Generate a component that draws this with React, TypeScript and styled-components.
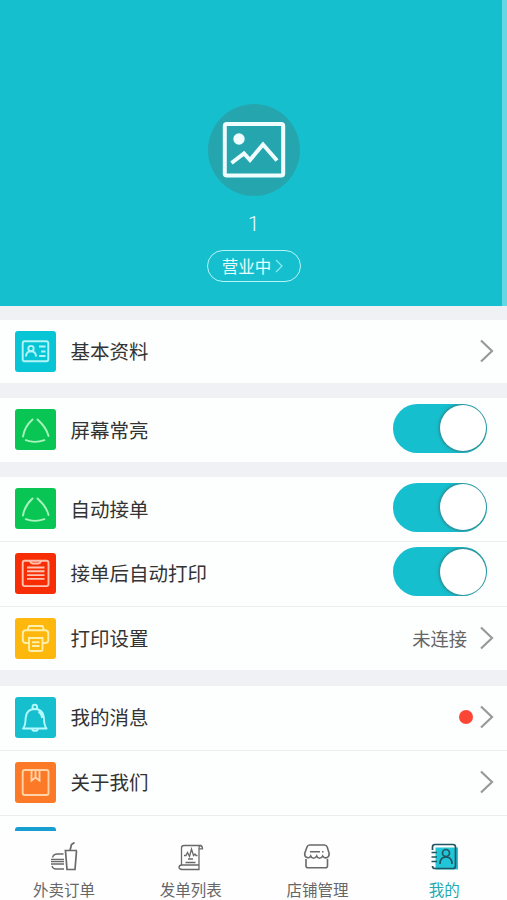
import React from "react";
import styled, { createGlobalStyle } from "styled-components";

const GlobalStyle = createGlobalStyle`
  * { box-sizing: border-box; }
  body {
    margin: 0;
    background: #eff1f4;
    font-family: "Noto Sans CJK SC", sans-serif;
    color: #333;
  }
`;

const Screen = styled.div`
  display: flex;
  flex-direction: column;
  height: 900px;
  width: 507px;
  overflow: hidden;
  background: #eff1f4;
`;

const Header = styled.header`
  flex: none;
  height: 306px;
  padding-top: 104px;
  display: flex;
  flex-direction: column;
  align-items: center;
  background: #16bfce;
  border-right: 5px solid #63d8e2;
  padding-left: 5px;
  color: #e8feff;
`;

const Avatar = styled.div`
  width: 92px;
  height: 92px;
  border-radius: 50%;
  background: #25a6af;
  display: flex;
  align-items: center;
  justify-content: center;
`;

const ShopName = styled.div`
  margin-top: 14px;
  height: 28px;
  line-height: 28px;
  font-family: Roboto, sans-serif;
  font-size: 21px;
  font-weight: 300;
`;

const Status = styled.button`
  margin: 12px 0 0;
  width: 94px;
  height: 32px;
  padding: 0 1px 0 0;
  border: 1.6px solid #b5f5f7;
  border-radius: 16px;
  background: none;
  color: inherit;
  font: 16.5px/28px "Noto Sans CJK SC", sans-serif;
  display: flex;
  align-items: center;
  justify-content: center;
  gap: 3px;
`;

const List = styled.main`
  flex: 1;
  min-height: 0;
  overflow: hidden;
`;

const Group = styled.section<{ $gap: number }>`
  margin-top: ${(p) => p.$gap}px;
  background: #fdfefe;
`;

const Row = styled.div<{ $height?: number }>`
  height: ${(p) => p.$height ?? 64}px;
  padding: 0 13px 1px 15px;
  display: flex;
  align-items: center;
  & + & {
    height: 64.7px;
    border-top: 1px solid #ebedf0;
  }
`;

const Tile = styled.div<{ $color: string }>`
  width: 41px;
  height: 41px;
  border-radius: 3px;
  flex: none;
  background: ${(p) => p.$color};
  svg { display: block; }
`;

const Label = styled.div`
  margin-left: 14.5px;
  flex: 1;
  font-size: 19.5px;
  line-height: 28px;
`;

const Value = styled.span`
  font-size: 18.3px;
  line-height: 28px;
  color: #666;
  margin-right: 9px;
`;

const Dot = styled.span`
  width: 14px;
  height: 14px;
  border-radius: 50%;
  background: #fb4535;
  margin-right: 3px;
`;

const SwitchTrack = styled.div`
  width: 94px;
  height: 49px;
  margin: -3px 7px 0 0;
  padding: 1px;
  border-radius: 25px;
  background: #16bfce;
  overflow: hidden;
  display: flex;
  justify-content: flex-end;
  align-items: center;
`;

const Knob = styled.div`
  width: 46px;
  height: 46px;
  border-radius: 50%;
  background: #fff;
  box-shadow: 0 0 3px 1px rgba(65, 85, 85, 0.6);
`;

const Nav = styled.nav`
  flex: none;
  height: 69px;
  background: #fefefe;
  display: grid;
  grid-template-columns: repeat(4, 126.8px);
`;

const Tab = styled.div<{ $active?: boolean }>`
  display: flex;
  flex-direction: column;
  align-items: center;
  padding: 10px 0 0 1px;
  color: ${(p) => (p.$active ? "#25a9b1" : "#666")};
  font-size: 15.5px;
  line-height: 22px;
  svg { display: block; margin: 0 0 5px; }
`;

const Chevron = () => (
  <svg width="18" height="26" viewBox="0 0 18 26" fill="none" stroke="#999" strokeWidth="2.2">
    <path d="M5 2.500 16 13 5 23.500" />
  </svg>
);

const Toggle = () => (
  <SwitchTrack role="switch" aria-checked="true"><Knob /></SwitchTrack>
);

const glyphs: Record<string, React.ReactNode> = {
  card: (
    <g stroke="#b2f5f8">
      <rect x="7.7" y="10.2" width="25.6" height="20" rx="2" />
      <circle cx="16" cy="17.6" r="2.7" />
      <path d="M10.8 25.500c.4-3 2.300-5.200 5.200-5.200s4.800 2.200 5.200 5.200M24 15.500h6.500M26 20.500h4.500M24 25h6.500" />
    </g>
  ),
  triangle: (
    <g stroke="#a9f3bd" strokeLinecap="round">
      <path d="M17.500 10.500C12.500 15 9 21 8 27.500M22.500 10.500C27.500 15 32 20.500 33.500 27M10.800 31.200c5 1.900 13 1.900 18.600 0" />
    </g>
  ),
  clipboard: (
    <g stroke="#ffc2b0">
      <rect x="7.700" y="7.700" width="25.800" height="25.400" rx="2" />
      <path d="M15 7.700c.6 2.600 1.800 2.800 5.500 2.800s5-.2 5.500-2.800M12 14.500h17.500M12 18.300h17.500M12 22.100h17.500M12 25.900h17.500" />
    </g>
  ),
  printer: (
    <g stroke="#fff0a9">
      <path d="M12.500 12.200 14 8h13.500l1.500 4.200M14 25H11c-2 0-3.200-1-3.200-3v-6.500c0-2 1.200-3.200 3.200-3.200h19c2 0 3.300 1.200 3.300 3.200V22c0 2-1.300 3-3.300 3h-3" />
      <path d="M14 20h13.500v11.500q0 1.500-1.500 1.500H15.500Q14 33 14 31.500ZM17 24.200h7.500M17 28h7.500" />
    </g>
  ),
  bell: (
    <g stroke="#b5faff" strokeLinejoin="round">
      <circle cx="19.800" cy="10" r="2.300" />
      <path d="M8 31.500c3-3.500 2.200-7.500 2.800-11.500.8-5.500 4.700-8 9-8s8.200 2.500 9 8c.6 4-.2 8 2.800 11.500Z" />
      <path d="M23.500 14.500c2 1 3.500 3.500 4 6.500" strokeWidth="2.600" />
      <path d="M17 32c.5 2.400 5.500 2.400 6 0" />
    </g>
  ),
  box: (
    <g stroke="#ffd2a7">
      <rect x="7.700" y="8" width="25.800" height="25" rx="2" />
      <path d="M16.500 8v10.500l4-3 4 3V8M20.500 8v7" />
    </g>
  ),
};

const IconTile = ({ color, glyph }: { color: string; glyph?: string }) => (
  <Tile $color={color}>
    {glyph && <svg width="41" height="41" viewBox="0 0 41 41" fill="none" strokeWidth="1.9">{glyphs[glyph]}</svg>}
  </Tile>
);

const iconProps = { width: 32, height: 32, viewBox: "0 0 32 32", fill: "none", stroke: "#6a6a6a", strokeWidth: 1.3 };

export default function App() {
  return (
    <>
      <GlobalStyle />
      <Screen>
        <Header>
          <Avatar>
            <svg width="64" height="58" viewBox="0 0 64 58" fill="none" stroke="#effdff" strokeWidth="4">
              <rect x="2.800" y="3" width="58.400" height="51.500" rx="2" />
              <circle cx="17" cy="18" r="5.700" fill="#effdff" stroke="none" />
              <path d="m9.500 42 12.500-9.500 6 6.500 13-15.500L55 39.500" />
            </svg>
          </Avatar>
          <ShopName>1</ShopName>
          <Status>
            营业中
            <svg width="10" height="14" viewBox="0 0 10 14" fill="none" stroke="#8debf0" strokeWidth="1.2"><path d="m2 1 6 6-6 6" /></svg>
          </Status>
        </Header>
        <List>
          <Group $gap={14}>
            <Row $height={63}><IconTile color="#08c5d6" glyph="card" /><Label>基本资料</Label><Chevron /></Row>
          </Group>
          <Group $gap={15}>
            <Row><IconTile color="#09c654" glyph="triangle" /><Label>屏幕常亮</Label><Toggle /></Row>
          </Group>
          <Group $gap={15}>
            <Row><IconTile color="#09c654" glyph="triangle" /><Label>自动接单</Label><Toggle /></Row>
            <Row><IconTile color="#f72e05" glyph="clipboard" /><Label>接单后自动打印</Label><Toggle /></Row>
            <Row><IconTile color="#fdb70d" glyph="printer" /><Label>打印设置</Label><Value>未连接</Value><Chevron /></Row>
          </Group>
          <Group $gap={15.6}>
            <Row><IconTile color="#16bfce" glyph="bell" /><Label>我的消息</Label><Dot /><Chevron /></Row>
            <Row><IconTile color="#fb7927" glyph="box" /><Label>关于我们</Label><Chevron /></Row>
            <Row><IconTile color="#189fd1" /></Row>
          </Group>
        </List>
        <Nav>
          <Tab>
            <svg {...iconProps}>
              <path d="M16.500 9.500H29M17.500 10l1.500 18.500h8L28.500 10M22 9.500 23.500 3.500 26.500 1.500" strokeWidth="1.700" />
              <path d="M15.500 13H9.500C6.500 13 5 14.500 4.500 16.500M3 18.500h13M3 20.700h13M3 23h13M4 25c.5 2 1.500 3 4 3h8" />
            </svg>
            外卖订单
          </Tab>
          <Tab>
            <svg {...iconProps}>
              <path d="M6.500 24V7Q6.500 4.500 9 4.500h16q2.500 0 2.500 3.300h-3.500M24 24V7.500Q24 4.500 26 4.500M7 24h17v4.500H7q-3-.3-3-2.300t3-2.200ZM9 14.500h2l1.500-3 2 4 2-7.500 2 6.500 1.500-1.500 1 1.500h1.500M10.500 21.500h10M13 18h5" />
            </svg>
            发单列表
          </Tab>
          <Tab>
            <svg {...iconProps} strokeWidth="1.600">
              <path d="M8.500 4h15q2 0 2.700 2l2 6.500c0 5-5 5.500-6.500 2.500-1.500 3-5 3-6 0-1.500 3-5 3-6 0-1.500 3-6.200 2-6-2.500L6 6q.7-2 2.500-2ZM5 18v6.800q0 2 2 2h17.500q2 0 2-2V18M9 10.700h10M21 10.700h1.500" />
            </svg>
            店铺管理
          </Tab>
          <Tab $active>
            <svg {...iconProps} stroke="#235461" strokeWidth="1.700">
              <path d="M7.500 6.500H30V28.500H7.500Z" fill="#20c5d7" stroke="none" />
              <path d="M4.500 9V6q0-2.500 2.500-2.500h18q2.500 0 2.500 2.500v19q0 2.500-2.500 2.500H7q-2.500 0-2.500-2.500V25M3.500 11.500H9M3.500 16H9M3.500 20.500H9" />
              <circle cx="18" cy="12" r="3.500" /><path d="M12 23q0-7 6-7t6 7" />
            </svg>
            我的
          </Tab>
        </Nav>
      </Screen>
    </>
  );
}
